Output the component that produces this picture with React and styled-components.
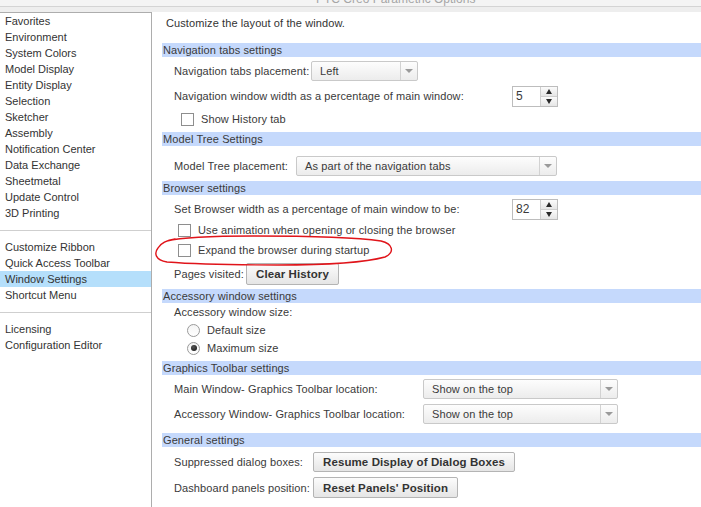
import React from 'react';
import styled, { createGlobalStyle } from 'styled-components';

const GlobalStyle = createGlobalStyle`
  html, body {
    margin: 0;
    padding: 0;
    background: #ffffff;
  }
  body {
    font-family: 'Liberation Sans', Arial, sans-serif;
    font-size: 11px;
    color: #3a3a3a;
  }
`;

const sideGroups = [
  [
    'Favorites',
    'Environment',
    'System Colors',
    'Model Display',
    'Entity Display',
    'Selection',
    'Sketcher',
    'Assembly',
    'Notification Center',
    'Data Exchange',
    'Sheetmetal',
    'Update Control',
    '3D Printing',
  ],
  ['Customize Ribbon', 'Quick Access Toolbar', 'Window Settings', 'Shortcut Menu'],
  ['Licensing', 'Configuration Editor'],
];

const App = () => {
  return (
    <Page>
      <GlobalStyle />
      <TitleBar>
        <TitleText>PTC Creo Parametric Options</TitleText>
      </TitleBar>
      <Strip />
      <Body>
        <Sidebar>
          {sideGroups.map((group, gi) => (
            <React.Fragment key={gi}>
              {gi > 0 && <SideDivider />}
              {group.map((item) => (
                <SideItem key={item} $active={item === 'Window Settings'}>
                  {item}
                </SideItem>
              ))}
            </React.Fragment>
          ))}
        </Sidebar>

        <Content>
          <Intro>Customize the layout of the window.</Intro>

          <Band $mt={13}>Navigation tabs settings</Band>
          <Row $mt={4} $h={20}>
            <Label $w={137}>Navigation tabs placement:</Label>
            <Select $w={107}>
              <SelectValue>Left</SelectValue>
              <SelectArrow />
            </Select>
          </Row>
          <Row $mt={5} $h={20}>
            <Label $w={338}>Navigation window width as a percentage of main window:</Label>
            <Spinner value='5' />
          </Row>
          <Row $mt={5} $h={16} $pl={19}>
            <CheckBox />
            <CheckText>Show History tab</CheckText>
          </Row>

          <Band $mt={5}>Model Tree Settings</Band>
          <Row $mt={10} $h={20}>
            <Label $w={122}>Model Tree placement:</Label>
            <Select $w={261}>
              <SelectValue>As part of the navigation tabs</SelectValue>
              <SelectArrow />
            </Select>
          </Row>

          <Band $mt={5}>Browser settings</Band>
          <Row $mt={4} $h={20}>
            <Label $w={338}>Set Browser width as a percentage of main window to be:</Label>
            <Spinner value='82' />
          </Row>
          <Row $mt={3} $h={16} $pl={16}>
            <CheckBox />
            <CheckText>Use animation when opening or closing the browser</CheckText>
          </Row>
          <Row $mt={4} $h={16} $pl={16}>
            <CheckBox />
            <CheckText>Expand the browser during startup</CheckText>
          </Row>
          <Row $mt={5} $h={22}>
            <Label $w={72}>Pages visited:</Label>
            <Button $h={22}>Clear History</Button>
          </Row>

          <Band $mt={4}>Accessory window settings</Band>
          <Row $mt={2} $h={14}>
            <Label>Accessory window size:</Label>
          </Row>
          <Row $mt={3} $h={16} $pl={25}>
            <Radio />
            <CheckText>Default size</CheckText>
          </Row>
          <Row $mt={2} $h={16} $pl={25}>
            <Radio $checked />
            <CheckText>Maximum size</CheckText>
          </Row>

          <Band $mt={5}>Graphics Toolbar settings</Band>
          <Row $mt={4} $h={20}>
            <Label $w={249}>Main Window- Graphics Toolbar location:</Label>
            <Select $w={195}>
              <SelectValue>Show on the top</SelectValue>
              <SelectArrow />
            </Select>
          </Row>
          <Row $mt={5} $h={20}>
            <Label $w={249}>Accessory Window- Graphics Toolbar location:</Label>
            <Select $w={195}>
              <SelectValue>Show on the top</SelectValue>
              <SelectArrow />
            </Select>
          </Row>

          <Band $mt={9}>General settings</Band>
          <Row $mt={5} $h={20}>
            <Label $w={139}>Suppressed dialog boxes:</Label>
            <Button $h={20}>Resume Display of Dialog Boxes</Button>
          </Row>
          <Row $mt={5} $h={21}>
            <Label $w={139}>Dashboard panels position:</Label>
            <Button $h={21}>Reset Panels' Position</Button>
          </Row>

          {/* red hand-drawn mark over the "Expand the browser" row */}
          <Scribble width='240' height='42' viewBox='0 0 240 42'>
            <path
              d='M14 13 C 30 9, 60 8, 100 8 C 150 8, 200 9, 228 13 C 240 16, 242 24, 232 29 C 210 35, 170 37, 125 37 C 80 37, 40 36, 14 34 C 2 32, 1 25, 5 20 C 8 15, 14 12, 22 11'
              fill='none'
              stroke='#e0141a'
              strokeWidth='1.4'
              strokeLinecap='round'
            />
          </Scribble>
        </Content>
      </Body>
    </Page>
  );
};

const Spinner = ({ value }) => (
  <SpinBox>
    <SpinValue>{value}</SpinValue>
    <SpinButtons>
      <SpinButton>
        <Tri $up />
      </SpinButton>
      <SpinButton>
        <Tri />
      </SpinButton>
    </SpinButtons>
  </SpinBox>
);

const Page = styled.div`
  width: 701px;
  height: 507px;
  display: flex;
  flex-direction: column;
  overflow: hidden;
  background: #ffffff;
`;

const TitleBar = styled.div`
  height: 6px;
  overflow: hidden;
  background: #f4f4f4;
  border-bottom: 1px solid #d4d4d4;
`;

const TitleText = styled.div`
  margin-top: -7px;
  padding-left: 316px;
  font-size: 12px;
  line-height: 12px;
  color: #a6a6a6;
  white-space: nowrap;
`;

const Strip = styled.div`
  height: 5px;
  background: #eeeeee;
`;

const Body = styled.div`
  flex: 1;
  display: flex;
  min-height: 0;
`;

const Sidebar = styled.div`
  width: 151px;
  flex-shrink: 0;
  border-top: 1px solid #adadad;
  border-right: 1px solid #adadad;
  background: #ffffff;
`;

const SideItem = styled.div`
  height: 16px;
  line-height: 16px;
  padding-left: 5px;
  color: #333333;
  white-space: nowrap;
  background: ${(p) => (p.$active ? '#b5dffb' : 'transparent')};
`;

const SideDivider = styled.div`
  height: 1px;
  background: #cfcfcf;
  margin: 9px 0 8px;
`;

const Content = styled.div`
  position: relative;
  flex: 1;
  padding: 4px 0 0 10px;
  display: flex;
  flex-direction: column;
  letter-spacing: 0.1px;
`;

const Intro = styled.div`
  height: 14px;
  line-height: 14px;
  padding-left: 4px;
  color: #333333;
`;

const Band = styled.div`
  margin-top: ${(p) => p.$mt || 0}px;
  height: 14px;
  line-height: 14px;
  padding-left: 1px;
  background: #c5d9fc;
  color: #3a3a3a;
  white-space: nowrap;
`;

const Row = styled.div`
  display: flex;
  align-items: center;
  margin-top: ${(p) => p.$mt || 0}px;
  height: ${(p) => p.$h || 16}px;
  padding-left: ${(p) => p.$pl ?? 12}px;
  white-space: nowrap;
`;

const Label = styled.span`
  flex-shrink: 0;
  width: ${(p) => (p.$w ? `${p.$w}px` : 'auto')};
  color: #3a3a3a;
`;

const Select = styled.div`
  display: flex;
  width: ${(p) => p.$w}px;
  height: 20px;
  box-sizing: border-box;
  border: 1px solid #c9c9c9;
  border-radius: 2px;
  background: linear-gradient(#fdfdfd, #ececec);
`;

const SelectValue = styled.span`
  flex: 1;
  padding-left: 8px;
  line-height: 18px;
  color: #3a3a3a;
  overflow: hidden;
`;

const SelectArrow = styled.span`
  width: 16px;
  border-left: 1px solid #d2d2d2;
  display: flex;
  align-items: center;
  justify-content: center;
  &::after {
    content: '';
    width: 0;
    height: 0;
    border-left: 4px solid transparent;
    border-right: 4px solid transparent;
    border-top: 4px solid #9a9a9a;
  }
`;

const SpinBox = styled.div`
  display: flex;
  width: 46px;
  height: 21px;
  box-sizing: border-box;
  border: 1px solid #bdbdbd;
  background: #ffffff;
`;

const SpinValue = styled.span`
  flex: 1;
  padding-left: 3px;
  line-height: 19px;
  font-size: 12px;
  color: #3a3a3a;
`;

const SpinButtons = styled.div`
  width: 16px;
  display: flex;
  flex-direction: column;
  border-left: 1px solid #cfcfcf;
`;

const SpinButton = styled.div`
  flex: 1;
  display: flex;
  align-items: center;
  justify-content: center;
  background: linear-gradient(#fbfbfb, #e6e6e6);
  & + & {
    border-top: 1px solid #cfcfcf;
  }
`;

const Tri = styled.span`
  width: 0;
  height: 0;
  border-left: 3.5px solid transparent;
  border-right: 3.5px solid transparent;
  ${(p) =>
    p.$up ? 'border-bottom: 5px solid #2a2a2a;' : 'border-top: 5px solid #2a2a2a;'}
`;

const CheckBox = styled.span`
  width: 13px;
  height: 13px;
  box-sizing: border-box;
  flex-shrink: 0;
  border: 1px solid #8e8e8e;
  background: #ffffff;
`;

const CheckText = styled.span`
  margin-left: 7px;
  color: #3a3a3a;
`;

const Radio = styled.span`
  position: relative;
  width: 13px;
  height: 13px;
  box-sizing: border-box;
  flex-shrink: 0;
  border: 1px solid #9a9a9a;
  border-radius: 50%;
  background: linear-gradient(#f4f4f4, #ffffff);
  &::after {
    content: '';
    display: ${(p) => (p.$checked ? 'block' : 'none')};
    position: absolute;
    left: 2.5px;
    top: 2.5px;
    width: 6px;
    height: 6px;
    border-radius: 50%;
    background: radial-gradient(circle at 40% 35%, #555555, #111111);
  }
`;

const Button = styled.button`
  height: ${(p) => p.$h || 21}px;
  padding: 0 9px;
  border: 1px solid #b4b4b4;
  border-radius: 2px;
  background: linear-gradient(#fcfcfc, #e5e5e5);
  font-family: 'Liberation Sans', Arial, sans-serif;
  font-size: 11.5px;
  font-weight: bold;
  color: #333333;
  letter-spacing: 0.1px;
  white-space: nowrap;
  cursor: pointer;
`;

const Scribble = styled.svg`
  position: absolute;
  left: 1px;
  top: 216px;
  pointer-events: none;
`;

export default App;
